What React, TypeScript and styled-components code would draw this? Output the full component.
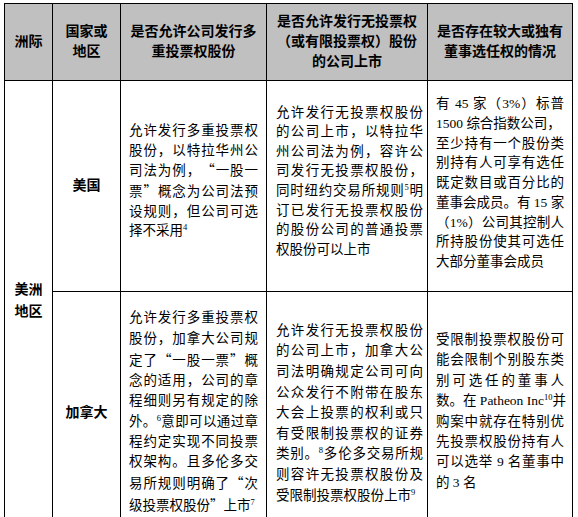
import React from 'react';
import styled, { createGlobalStyle } from 'styled-components';

const GlobalStyle = createGlobalStyle`
  html, body {
    margin: 0;
    padding: 0;
    background: #fff;
  }
  body {
    font-family: "Liberation Serif", "Noto Sans CJK SC", serif;
    color: #000;
    text-autospace: no-autospace;
    text-spacing-trim: space-all;
  }
`;

const Page = styled.div`
  padding: 3px 0 0 4px;
`;

const Table = styled.table`
  border-collapse: collapse;
  table-layout: fixed;
  width: 568px;
  font-size: 14px;
`;

const HeadCell = styled.th`
  background: #c0c0c0;
  border: 1px solid #000;
  height: 76px;
  padding: 0 4px;
  font-weight: 700;
  line-height: 20px;
  text-align: center;
  vertical-align: middle;
`;

const NameCell = styled.td<{ $pb?: number }>`
  border: 1px solid #000;
  padding: 0 2px ${p => p.$pb ?? 0}px;
  font-weight: 700;
  line-height: 22px;
  text-align: center;
  vertical-align: middle;
`;

const TextCell = styled.td<{ $pl: number; $pr: number; $pb?: number; $lh: number }>`
  border: 1px solid #000;
  padding: 0 ${p => p.$pr}px ${p => p.$pb ?? 0}px ${p => p.$pl}px;
  font-size: 13.5px;
  line-height: ${p => p.$lh}px;
  vertical-align: middle;
`;

const Line = styled.div<{ $last?: boolean }>`
  white-space: nowrap;
  text-align: justify;
  text-align-last: ${p => (p.$last ? 'left' : 'justify')};
`;

// full-width CJK quotation marks, as in the source document
const Q = styled.span`
  font-family: "Noto Sans CJK SC", sans-serif;
`;

const Sup = styled.sup`
  font-size: 8.5px;
  line-height: 0;
  vertical-align: 5px;
`;

type Cell = React.ReactNode[];

const lines = (items: Cell, loose: number[] = []) =>
  items.map((t, i) => (
    <Line key={i} $last={i === items.length - 1 || loose.includes(i)}>
      {t}
    </Line>
  ));

const usA: Cell = [
  '允许发行多重投票权',
  '股份，以特拉华州公',
  <>司法为例，<Q>“</Q>一股一</>,
  <>票<Q>”</Q>概念为公司法预</>,
  '设规则，但公司可选',
  <>择不采用<Sup>4</Sup></>,
];

const usB: Cell = [
  '允许发行无投票权股份',
  '的公司上市，以特拉华',
  '州公司法为例，容许公',
  '司发行无投票权股份，',
  <>同时纽约交易所规则<Sup>5</Sup>明</>,
  '订已发行无投票权股份',
  '的股份公司的普通投票',
  '权股份可以上市',
];

const usC: Cell = [
  '有 45 家（3%）标普',
  '1500 综合指数公司，',
  '至少持有一个股份类',
  '别持有人可享有选任',
  '既定数目或百分比的',
  '董事会成员。有 15 家',
  '（1%）公司其控制人',
  '所持股份使其可选任',
  '大部分董事会成员',
];

const caA: Cell = [
  '允许发行多重投票权',
  '股份，加拿大公司规',
  <>定了<Q>“</Q>一股一票<Q>”</Q>概</>,
  '念的适用，公司的章',
  '程细则另有规定的除',
  <>外。<Sup>6</Sup>意即可以通过章</>,
  '程约定实现不同投票',
  '权架构。且多伦多交',
  <>易所规则明确了<Q>“</Q>次</>,
  <>级投票权股份<Q>”</Q>上市<Sup>7</Sup></>,
];

const caB: Cell = [
  '允许发行无投票权股份',
  '的公司上市，加拿大公',
  '司法明确规定公司可向',
  '公众发行不附带在股东',
  '大会上投票的权利或只',
  '有受限制投票权的证券',
  <>类别。<Sup>8</Sup>多伦多交易所规</>,
  '则容许无投票权股份及',
  <>受限制投票权股份上市<Sup>9</Sup></>,
];

const caC: Cell = [
  '受限制投票权股份可',
  '能会限制个别股东类',
  '别可选任的董事人',
  <>数。在 Patheon Inc<Sup>10</Sup>并</>,
  '购案中就存在特别优',
  '先投票权股份持有人',
  '可以选举 9 名董事中',
  '的 3 名',
];

export default function App() {
  return (
    <>
      <GlobalStyle />
      <Page>
        <Table>
          <colgroup>
            <col style={{ width: 48 }} />
            <col style={{ width: 68 }} />
            <col style={{ width: 146 }} />
            <col style={{ width: 161 }} />
            <col style={{ width: 145 }} />
          </colgroup>
          <thead>
            <tr>
              <HeadCell>洲际</HeadCell>
              <HeadCell>国家或<br />地区</HeadCell>
              <HeadCell>是否允许公司发行多<br />重投票权股份</HeadCell>
              <HeadCell>是否允许发行无投票权<br />（或有限投票权）股份<br />的公司上市</HeadCell>
              <HeadCell>是否存在较大或独有<br />董事选任权的情况</HeadCell>
            </tr>
          </thead>
          <tbody>
            <tr style={{ height: 211 }}>
              <NameCell rowSpan={2} $pb={25}>美洲<br />地区</NameCell>
              <NameCell>美国</NameCell>
              <TextCell $pl={8} $pr={8} $pb={10} $lh={19.6}>{lines(usA)}</TextCell>
              <TextCell $pl={9} $pr={4} $pb={10} $lh={19.6}>{lines(usB)}</TextCell>
              <TextCell $pl={8} $pr={8} $pb={6} $lh={19.7}>{lines(usC, [1])}</TextCell>
            </tr>
            <tr style={{ height: 254 }}>
              <NameCell $pb={12}>加拿大</NameCell>
              <TextCell $pl={8} $pr={8} $pb={12} $lh={20.2}>{lines(caA)}</TextCell>
              <TextCell $pl={9} $pr={4} $pb={10} $lh={20.6}>{lines(caB)}</TextCell>
              <TextCell $pl={8} $pr={8} $pb={14} $lh={20.4}>{lines(caC)}</TextCell>
            </tr>
          </tbody>
        </Table>
      </Page>
    </>
  );
}
